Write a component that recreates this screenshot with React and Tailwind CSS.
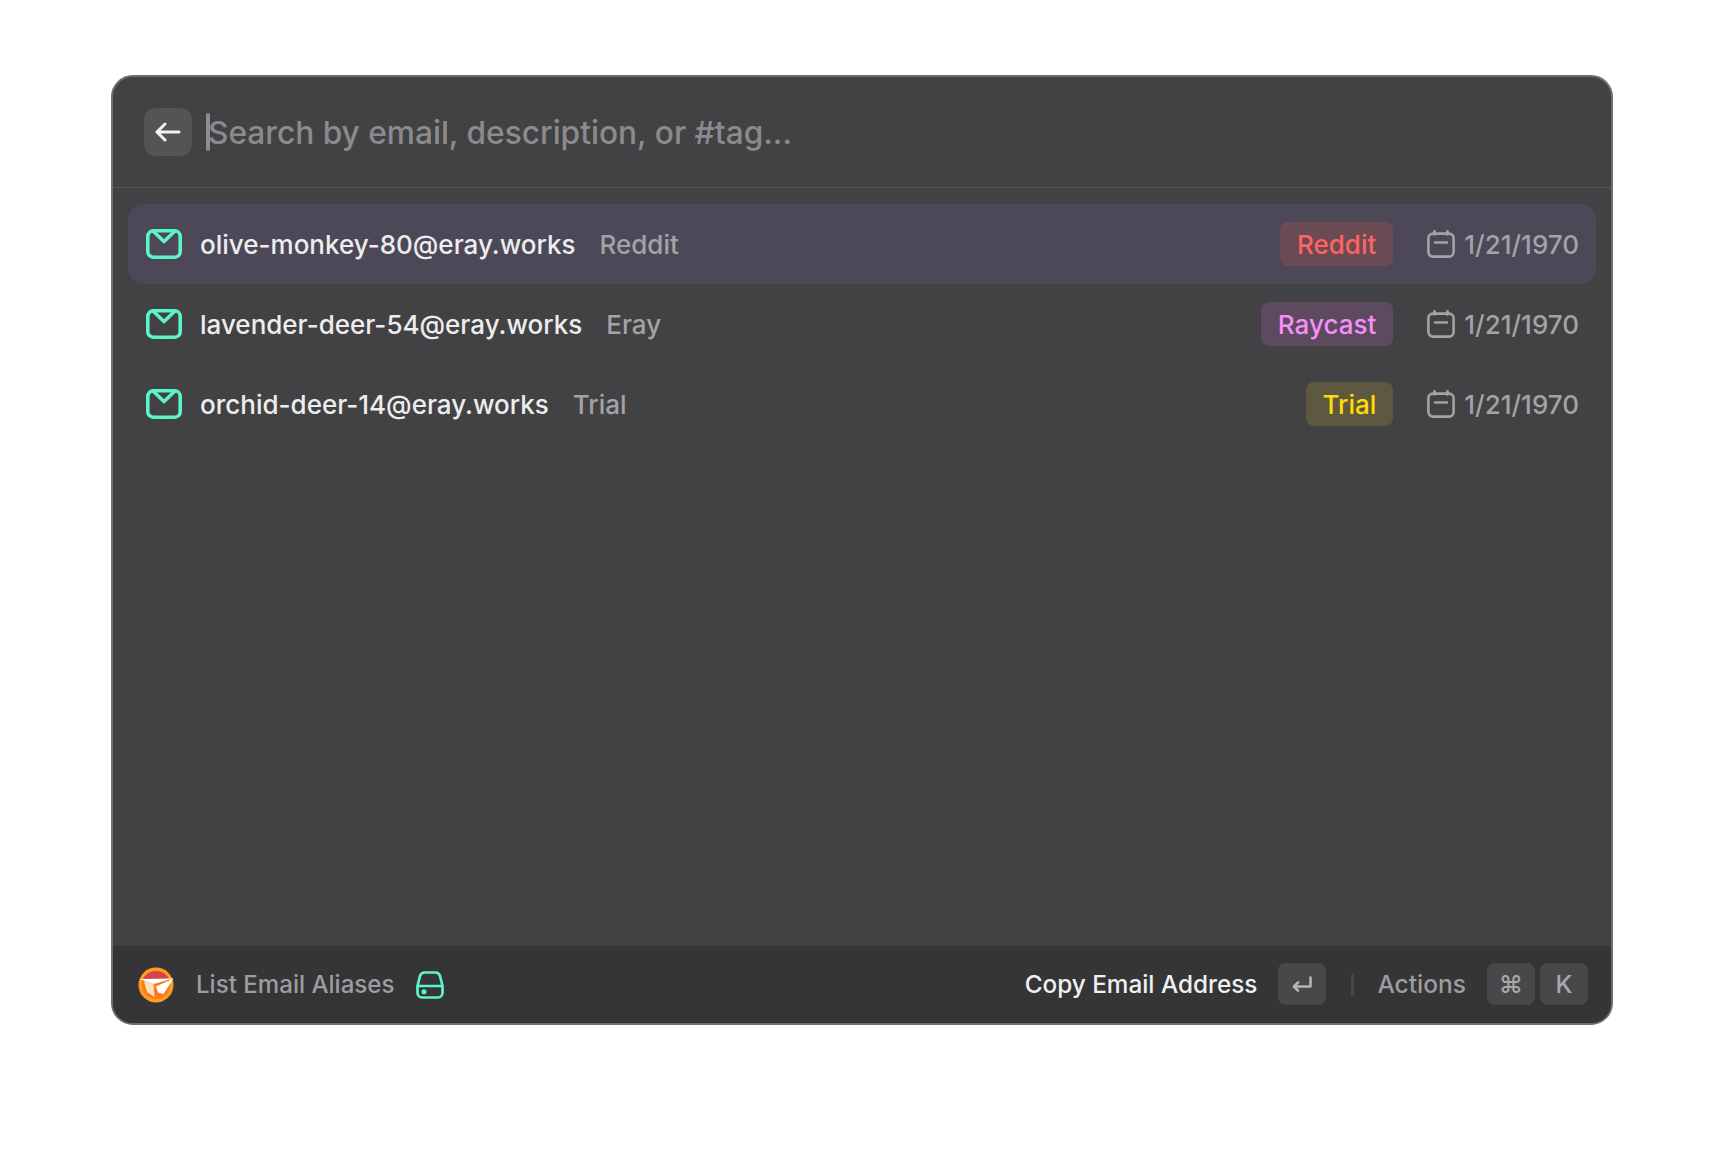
import React from 'react';

const font = { fontFamily: 'Inter, "Liberation Sans", sans-serif' };

const aliases = [
  { email: 'olive-monkey-80@eray.works', note: 'Reddit', tag: 'Reddit', tagClass: 'bg-[#6a4b54] text-[#ff6363]', active: true },
  { email: 'lavender-deer-54@eray.works', note: 'Eray', tag: 'Raycast', tagClass: 'bg-[#5d4a5f] text-[#f68efc]' },
  { email: 'orchid-deer-14@eray.works', note: 'Trial', tag: 'Trial', tagClass: 'bg-[#5f5840] text-[#ffdd00]' },
];

const MailIcon = () => (
  <svg viewBox="0 0 36 30" className="w-9 h-[30px] shrink-0" fill="none" stroke="#5cf5c5" strokeWidth="3.6" strokeLinecap="round" strokeLinejoin="round">
    <rect x="1.8" y="1.8" width="32.4" height="26.4" rx="5.5" />
    <path d="M7.5 2.5 L18 12.5 L28.5 2.5" />
  </svg>
);

const CalendarIcon = () => (
  <svg viewBox="0 0 28 28" className="w-7 h-7 shrink-0" fill="none" stroke="#a3a3a5" strokeWidth="2.6" strokeLinecap="round" strokeLinejoin="round">
    <rect x="1.4" y="3.6" width="25.2" height="23" rx="4.5" />
    <path d="M7.5 1.2 V4.5 M20.5 1.2 V4.5 M8 12.5 H20" />
  </svg>
);

const DriveIcon = () => (
  <svg viewBox="0 0 28 28" className="w-7 h-7 shrink-0" fill="none" stroke="#5cf5c5" strokeWidth="2.7" strokeLinecap="round" strokeLinejoin="round">
    <path d="M8.5 1.5 H19.5 A5 5 0 0 1 24 5 L26.5 15 V22 A4.6 4.6 0 0 1 22 26.5 H6 A4.6 4.6 0 0 1 1.5 22 V15 L4 5 A5 5 0 0 1 8.5 1.5 Z" />
    <path d="M1.8 15 H26.2" />
    <circle cx="8" cy="20.8" r="1.2" fill="#5cf5c5" />
  </svg>
);

const Logo = () => (
  <svg viewBox="0 0 36 36" className="w-9 h-9 shrink-0">
    <circle cx="18" cy="18" r="17.5" fill="#ff9c1c" />
    <circle cx="18" cy="18" r="14" fill="#f97a24" />
    <path d="M4.5 14 A14 14 0 0 1 31.5 14 Z" fill="#d9414f" />
    <path d="M6 14 L15.5 17 L16.5 30 L9 25 Z" fill="#ffe0ba" />
    <path d="M1.5 12 L35.5 11.5 L15.5 17 Z" fill="#ffffff" />
    <path d="M35.5 11.5 L18 19.5 L20 25.5 L25.5 27 Z" fill="#ffffff" />
  </svg>
);

const ReturnIcon = () => (
  <svg viewBox="0 0 20 16" className="w-5 h-4" fill="none" stroke="#b5b5b7" strokeWidth="2.6" strokeLinecap="round" strokeLinejoin="round">
    <path d="M18.5 1.5 V10.5 H2" />
    <path d="M6 6.5 L2 10.5 L6 14.5" />
  </svg>
);

const Key = ({ children, className = '' }) => (
  <div className={`w-12 h-[42px] -mt-px rounded-lg bg-[#48484a] flex items-center justify-center font-medium text-[#a9a9ab] ${className}`}>
    {children}
  </div>
);

const Row = ({ email, note, tag, tagClass, active }) => (
  <div className={`h-20 rounded-2xl flex items-center pl-[18px] pr-[17px] text-[26px] font-[450] ${active ? 'bg-[#4c4857]' : ''}`}>
    <MailIcon />
    <span className="ml-[18px] text-[#ededee]">{email}</span>
    <span className="ml-6 text-[#a3a3a5]">{note}</span>
    <div className="ml-auto flex items-center">
      <span className={`h-11 px-[17px] rounded-lg flex items-center ${tagClass}`}>{tag}</span>
      <div className="ml-[34px] flex items-center gap-[9px]">
        <CalendarIcon />
        <span className="text-[#a3a3a5]">1/21/1970</span>
      </div>
    </div>
  </div>
);

export default function App() {
  return (
    <div className="min-h-[1172px] bg-white pt-[75px] pl-[111px]" style={font}>
      <div className="w-[1502px] h-[950px] rounded-[22px] border-2 border-[#6e6e70] bg-[#424244] overflow-hidden flex flex-col">
        {/* Search bar */}
        <div className="h-[111px] shrink-0 border-b border-[#555557] flex items-center pl-[31px]">
          <div className="w-12 h-12 rounded-xl bg-[#545456] flex items-center justify-center">
            <svg viewBox="0 0 26 20" className="w-[26px] h-5" fill="none" stroke="#f2f2f2" strokeWidth="3" strokeLinecap="round" strokeLinejoin="round">
              <path d="M24 10 H2 M10 2 L2 10 L10 18" />
            </svg>
          </div>
          <div className="ml-[14px] w-1 h-[38px] rounded-sm bg-[#8e8e90]" />
          <span className="-ml-[2px] pt-[2px] text-[31.65px] font-[450] text-[#8b8b8d]">Search by email, description, or #tag...</span>
        </div>

        {/* Alias list */}
        <div className="flex-1 pt-4 px-[15px]">
          {aliases.map((a) => (
            <Row key={a.email} {...a} />
          ))}
        </div>

        {/* Footer */}
        <div className="h-[78px] shrink-0 bg-[#353537] border-t border-[#3e3e40] flex items-center pl-[25px] pr-[23px] text-[24.5px]">
          <Logo />
          <span className="ml-[22px] pt-px text-[24.1px] text-[#9d9d9f] font-[450]">List Email Aliases</span>
          <span className="ml-[22px]"><DriveIcon /></span>
          <span className="ml-auto text-[24.3px] font-medium text-[#f0f0f1]">Copy Email Address</span>
          <Key className="ml-[21px]"><ReturnIcon /></Key>
          <div className="ml-[25px] w-[3px] h-[22px] rounded bg-[#48484a]" />
          <span className="ml-[23px] font-medium text-[#9d9d9f]">Actions</span>
          <Key className="ml-[21px]">⌘</Key>
          <Key className="ml-[5px]">K</Key>
        </div>
      </div>
    </div>
  );
}
